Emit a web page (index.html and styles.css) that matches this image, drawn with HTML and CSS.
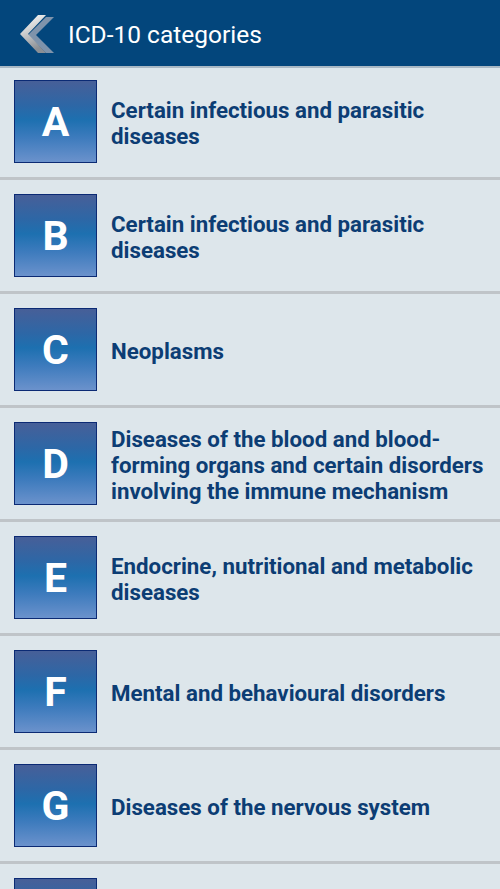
FILE: index.html
```html
<!DOCTYPE html>
<html>
<head>
<meta charset="utf-8">
<link rel="stylesheet" href="styles.css">
</head>
<body>
<header class="bar">
  <svg class="back" width="40" height="44" viewBox="0 0 40 44">
    <defs>
      <linearGradient id="sg" x1="0" y1="0" x2="0.3" y2="1">
        <stop offset="0" stop-color="#ffffff"/>
        <stop offset="0.45" stop-color="#d2d2d2"/>
        <stop offset="1" stop-color="#8b8f95"/>
      </linearGradient>
    </defs>
    <polygon points="9,22 27,4 35,4 17,22 35,40 27,40" fill="#7f93ab" transform="translate(3,1)"/>
    <polygon points="4,22 22,3 30,3 12,22 30,41 22,41" fill="url(#sg)"/>
  </svg>
  <h1 class="title">ICD-10 categories</h1>
</header>
<ul class="list">
  <li class="row"><span class="tile">A</span><span class="label">Certain infectious and parasitic diseases</span></li>
  <li class="row"><span class="tile">B</span><span class="label">Certain infectious and parasitic diseases</span></li>
  <li class="row"><span class="tile">C</span><span class="label">Neoplasms</span></li>
  <li class="row"><span class="tile">D</span><span class="label">Diseases of the blood and blood-forming organs and certain disorders involving the immune mechanism</span></li>
  <li class="row"><span class="tile">E</span><span class="label">Endocrine, nutritional and metabolic diseases</span></li>
  <li class="row"><span class="tile">F</span><span class="label">Mental and behavioural disorders</span></li>
  <li class="row"><span class="tile">G</span><span class="label">Diseases of the nervous system</span></li>
  <li class="row"><span class="tile">H</span><span class="label">Diseases of the eye and adnexa</span></li>
</ul>
</body>
</html>
```
FILE: styles.css
```css
html, body {
  margin: 0;
  padding: 0;
  background: #dde6eb;
  font-family: Roboto, "Liberation Sans", sans-serif;
  overflow: hidden;
  height: 889px;
}
.bar {
  height: 66px;
  background: #03467c;
  display: flex;
  align-items: center;
  border-bottom: 2px solid #a9b8c4;
  box-sizing: content-box;
}
.back {
  margin-left: 16px;
  margin-top: 2px;
}
.title {
  margin: 2px 0 0 12px;
  color: #ffffff;
  font-weight: 400;
  font-size: 24.5px;
}
.list {
  list-style: none;
  margin: 0;
  padding: 0;
}
.row {
  display: flex;
  align-items: center;
  padding: 14px 0 14px 14px;
  border-bottom: 3px solid #bfc4c8;
}
.row:first-child {
  padding-top: 12px;
}
.tile {
  flex: none;
  width: 81px;
  height: 81px;
  border: 1px solid #0b2a74;
  background: linear-gradient(to bottom, #475f98 0%, #2d67a6 30%, #1d70b0 48%, #3d7bbd 70%, #6b92cc 100%);
  color: #ffffff;
  font-weight: 700;
  font-size: 41px;
  display: flex;
  align-items: center;
  justify-content: center;
}
.label {
  margin-left: 14px;
  padding: 3px 10px 0 0;
  color: #0c3d74;
  font-weight: 700;
  font-size: 22.3px;
  line-height: 26px;
}
```
